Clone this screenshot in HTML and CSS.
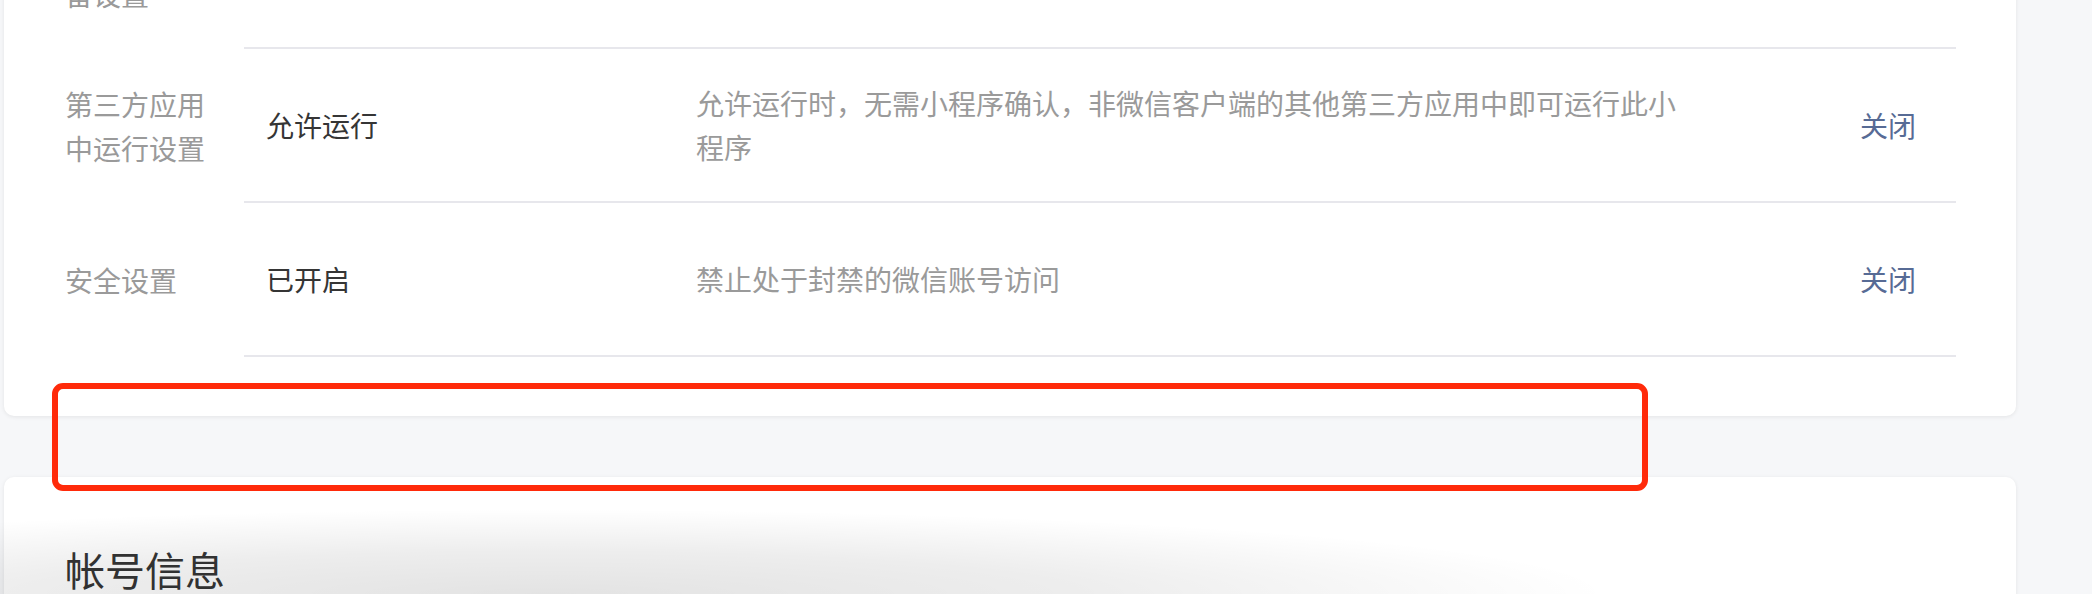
FILE: index.html
```html
<!DOCTYPE html>
<html lang="zh-CN">
<head>
    <meta charset="UTF-8">
    <meta name="viewport" content="width=device-width, initial-scale=1.0">
    <title>设置</title>
    <link rel="stylesheet" href="styles.css">
</head>
<body>

    <div class="page">
        <!-- 运行设置 -->
        <div class="card">
            <div class="setting-row">
                <div class="setting-label">其他运行设备设置</div>
                <div class="setting-body">
                    <div class="setting-value">已开启</div>
                    <div class="setting-desc">允许在其他设备中运行此小程序</div>
                    <div class="setting-action"><a href="#">关闭</a></div>
                </div>
            </div>

            <div class="setting-row">
                <div class="setting-label">第三方应用中运行设置</div>
                <div class="setting-body">
                    <div class="setting-value">允许运行</div>
                    <div class="setting-desc">允许运行时，无需小程序确认，非微信客户端的其他第三方应用中即可运行此小程序</div>
                    <div class="setting-action"><a href="#">关闭</a></div>
                </div>
            </div>

            <div class="setting-row">
                <div class="setting-label">安全设置</div>
                <div class="setting-body">
                    <div class="setting-value">已开启</div>
                    <div class="setting-desc">禁止处于封禁的微信账号访问</div>
                    <div class="setting-action"><a href="#">关闭</a></div>
                </div>
            </div>
        </div>

        <!-- 帐号信息 -->
        <div class="card card-account">
            <h2 class="card-title">帐号信息</h2>
        </div>
    </div>

    <!-- 标注框 -->
    <div class="highlight-box"></div>

    <!-- 底部阴影 -->
    <div class="bottom-shade"></div>

</body>
</html>
```

FILE: styles.css
```css
body {
    font-family: "Noto Sans CJK SC", "Noto Sans", sans-serif;
    margin: 0;
    padding: 0;
    background-color: #f6f7f9;
    color: #353535;
    height: 594px;
    overflow: hidden;
    position: relative;
}

.page {
    margin-top: -105px;
    padding-left: 4px;
    width: 2012px;
}

.card {
    background-color: #fff;
    border-radius: 10px;
    box-shadow: 0 1px 4px rgba(0, 0, 0, 0.08);
    padding: 0 60px 59px 61px;
}

.setting-row {
    display: flex;
}

.setting-label {
    width: 150px;
    padding-right: 29px;
    flex-shrink: 0;
    display: flex;
    align-items: center;
    font-size: 28px;
    line-height: 44px;
    color: #9a9a9a;
}

.setting-body {
    flex: 1;
    display: flex;
    align-items: center;
    min-height: 152px;
    border-bottom: 2px solid #e7e7ec;
    font-size: 28px;
    line-height: 44px;
}

.setting-value {
    width: 430px;
    padding-left: 22px;
    flex-shrink: 0;
    color: #353535;
}

.setting-desc {
    width: 990px;
    flex-shrink: 0;
    color: #9a9a9a;
}

.setting-action {
    flex: 1;
    text-align: right;
    padding-right: 40px;
}

.setting-action a {
    color: #576b95;
    text-decoration: none;
}

.card-account {
    margin-top: 61px;
    padding-top: 64px;
    height: 300px;
}

.card-title {
    margin: 0;
    font-size: 40px;
    line-height: 56px;
    font-weight: normal;
    color: #353535;
}

.highlight-box {
    position: absolute;
    top: 383px;
    left: 52px;
    width: 1596px;
    height: 108px;
    box-sizing: border-box;
    border: 6px solid #ff2a0a;
    border-radius: 11px;
}

.bottom-shade {
    position: absolute;
    left: 0;
    bottom: 0;
    width: 1700px;
    height: 85px;
    background: radial-gradient(ellipse 1060px 85px at 550px 100%, rgba(0, 0, 0, 0.11) 0%, rgba(0, 0, 0, 0.07) 50%, rgba(0, 0, 0, 0) 100%);
    pointer-events: none;
}
```
